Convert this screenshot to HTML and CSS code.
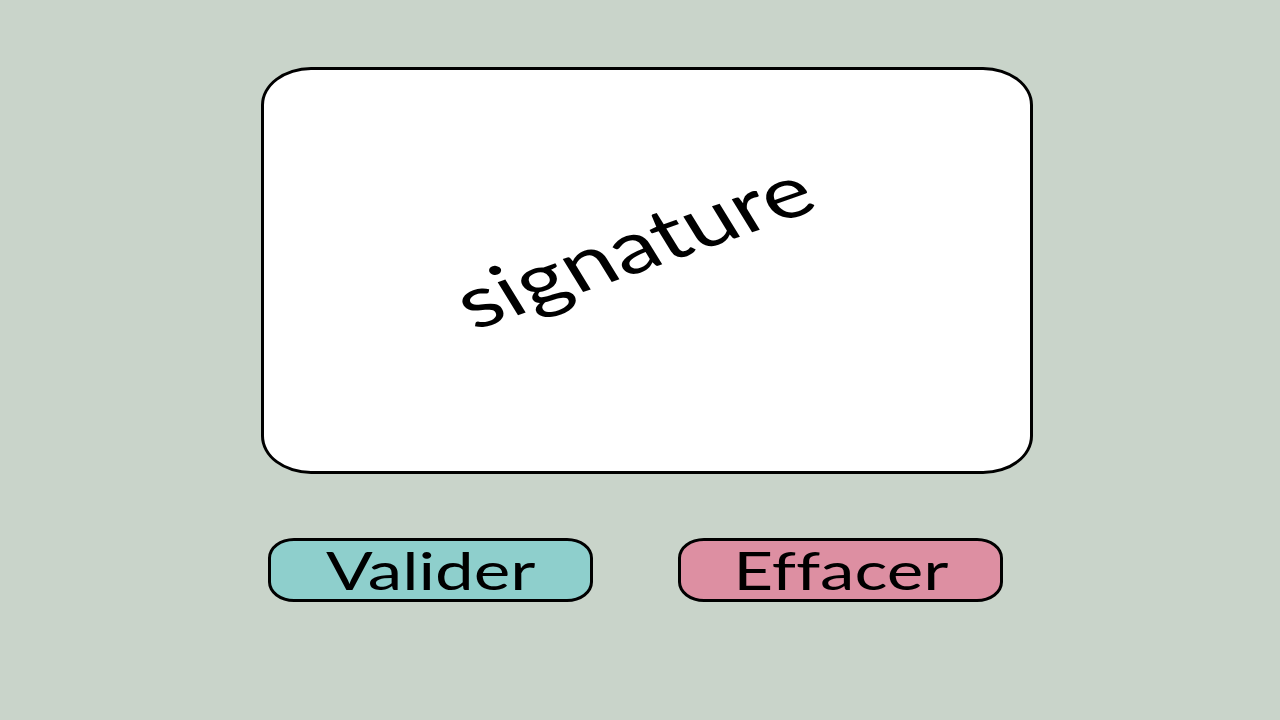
FILE: index.html
```html
<!DOCTYPE html>
<html>
<head>
    <title>Signature</title>
    <meta name="viewport" content="width=device-width, initial-scale=1.0">
    <link rel="stylesheet" href="styles.css">
</head>
<body>
    <div class="page">
        <div class="signature-pad">
            <span class="signature-text">signature</span>
        </div>

        <div class="actions">
            <button class="btn btn-validate"><span>Valider</span></button>
            <button class="btn btn-clear"><span>Effacer</span></button>
        </div>
    </div>
</body>
</html>
```

FILE: styles.css
```css
:root {
    --background: #c9d4ca;
    --pad: #fff;
    --ink: #000;
    --teal: #8ecfcc;
    --pink: #dd8fa2;
}

body {
    margin: 0;
    background-color: var(--background);
    font-family: "Lato", "DejaVu Sans", sans-serif;
    font-variant-ligatures: none;
    color: var(--ink);
}

.page {
    padding: 67px 0 0 261px;
}

.signature-pad {
    width: 772px;
    height: 407px;
    box-sizing: border-box;
    background: var(--pad);
    border: 3px solid var(--ink);
    border-radius: 50px / 38px;
    display: flex;
    align-items: center;
    justify-content: center;
    overflow: hidden;
}

.signature-text {
    font-size: 72px;
    transform: translate(-15px, -27px) scaleX(1.32) rotate(-25deg);
}

.actions {
    display: flex;
    gap: 85px;
    margin-top: 64px;
    padding-left: 7px;
}

.btn {
    width: 325px;
    height: 64px;
    box-sizing: border-box;
    border: 3px solid var(--ink);
    border-radius: 26px / 20px;
    font-family: inherit;
    font-variant-ligatures: none;
    font-size: 52px;
    color: var(--ink);
    padding: 0;
    display: flex;
    align-items: center;
    justify-content: center;
    cursor: pointer;
}

.btn span {
    display: inline-block;
    transform: scaleX(1.33);
}

.btn-validate {
    background: var(--teal);
}

.btn-clear {
    background: var(--pink);
}
```
